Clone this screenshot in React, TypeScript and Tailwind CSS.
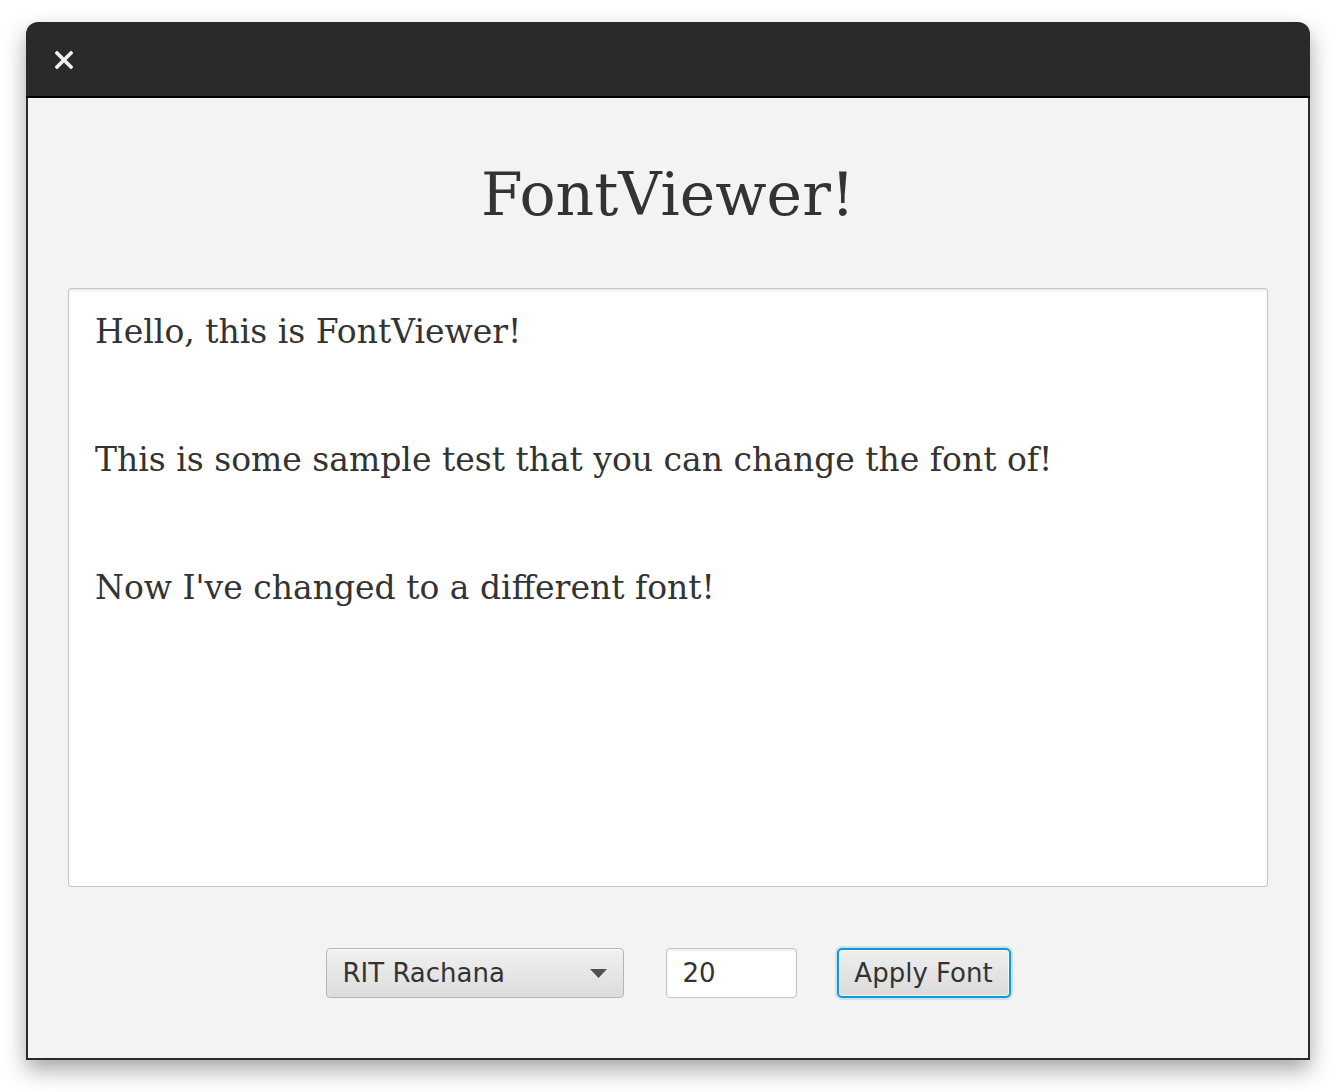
import { useState } from 'react';

const serif = "font-['DejaVu_Serif','Liberation_Serif',serif]";
const ui = "font-['DejaVu_Sans','Liberation_Sans',sans-serif]";

function CloseIcon() {
  return (
    <svg width="18" height="18" viewBox="0 0 18 18" className="block">
      <path d="M2 2 L16 16 M16 2 L2 16" stroke="#f2f2f2" strokeWidth="3.6" strokeLinecap="square" />
    </svg>
  );
}

export default function App() {
  const [size, setSize] = useState('20');
  const text =
    "Hello, this is FontViewer!\n\n\nThis is some sample test that you can change the font of!\n\n\nNow I've changed to a different font!";
  const lines = text.split('\n');

  return (
    <div className="w-[1336px] h-[1092px] bg-white pt-[22px] pl-[26px]">
      <div className="w-[1284px] h-[1038px] flex flex-col rounded-t-[12px] bg-[#2a2a2a] shadow-[0_10px_22px_rgba(0,0,0,0.35)] overflow-hidden">
        {/* title bar */}
        <div className="h-[74px] flex items-center pl-[29px] pt-[2px] shrink-0">
          <CloseIcon />
        </div>
        <div className="h-[2px] bg-black shrink-0" />
        {/* body */}
        <div className="flex-1 mx-[2px] mb-[2px] bg-[#f3f3f3] flex flex-col items-center">
          <h1 className={`${serif} text-[60px] leading-none text-[#333333] mt-[66px]`}>FontViewer!</h1>

          <div
            className={`${serif} mt-[64px] w-[1200px] h-[599px] bg-white border border-[#c5c5c5] rounded-[3px] shadow-[inset_0_2px_3px_rgba(0,0,0,0.08)] px-[26px] pt-[22px] text-[33px] leading-[42.67px] text-[#333333]`}
          >
            {lines.map((l, i) => (
              <div key={i} className="h-[42.67px] whitespace-pre">
                {l}
              </div>
            ))}
          </div>

          <div className={`${ui} mt-[61px] flex items-center text-[26px] text-[#333333]`}>
            <div className="w-[298px] h-[50px] rounded-[4px] border border-[#b5b5b5] bg-gradient-to-b from-[#f1f1f1] to-[#dcdcdc] shadow-[inset_0_1px_0_rgba(255,255,255,0.8)] flex items-center justify-between pl-[16px] pr-[16px]">
              <span>RIT Rachana</span>
              <svg width="17" height="9" viewBox="0 0 17 9" className="block">
                <path d="M0 0 H17 L8.5 9 Z" fill="#505050" />
              </svg>
            </div>
            <input
              value={size}
              onChange={(e) => setSize(e.target.value)}
              className="ml-[42px] w-[131px] h-[50px] rounded-[4px] border border-[#c4c4c4] bg-white shadow-[inset_0_2px_2px_rgba(0,0,0,0.07)] pl-[16px] outline-none text-[#333333]"
            />
            <button
              type="button"
              className="ml-[40px] w-[174px] h-[50px] rounded-[5px] border-2 border-[#0a9bd0] bg-gradient-to-b from-[#efefef] to-[#dadada] shadow-[0_0_0_2px_rgba(10,155,208,0.18),inset_0_0_0_1px_rgba(255,255,255,0.7)] text-[#333333]"
            >
              Apply Font
            </button>
          </div>
        </div>
      </div>
    </div>
  );
}
